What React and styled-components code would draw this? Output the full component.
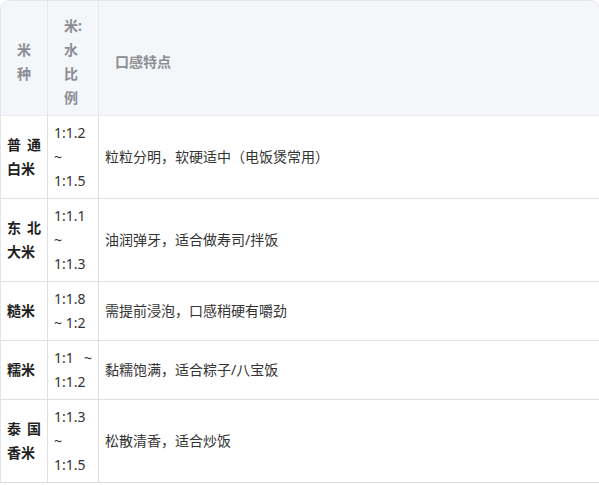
import React from 'react';
import styled, { createGlobalStyle } from 'styled-components';

const GlobalStyle = createGlobalStyle`
    body {
        margin: 0;
        background: #ffffff;
        font-family: "Noto Sans", "Noto Sans CJK SC", sans-serif;
    }
`;

const Table = styled.div`
    width: 600px;
    border: 1px solid #e4e5ea;
    border-bottom-color: #dedede;
    border-radius: 10px 10px 0 0;
    overflow: hidden;
    box-sizing: border-box;
`;

const Row = styled.div`
    display: grid;
    grid-template-columns: 47px 51px 1fr;
    background: ${(p) => (p.head ? '#f5f6fa' : '#ffffff')};
    border-bottom: ${(p) => (p.last ? 'none' : `1px solid ${p.head ? '#e8e9ee' : '#e0e0e0'}`)};
`;

const HeadCell = styled.div`
    box-sizing: border-box;
    display: flex;
    align-items: center;
    padding: 13px 16px 5px;
    font-size: 14px;
    line-height: 24px;
    font-weight: 700;
    color: #8b8d94;
    border-right: ${(p) => (p.end ? 'none' : '1px solid #e8e9ee')};
`;

const Cell = styled.div`
    box-sizing: border-box;
    display: flex;
    align-items: center;
    padding: 5px 6px;
    font-size: 14px;
    line-height: 24px;
    text-align: justify;
    color: ${(p) => (p.strong ? '#1f1f1f' : '#333333')};
    font-weight: ${(p) => (p.strong ? 700 : 400)};
    border-right: ${(p) => (p.end ? 'none' : '1px solid #e0e0e0')};

    span {
        display: block;
        width: 100%;
    }
`;

const rows = [
    { kind: '普通白米', ratio: '1:1.2 ~ 1:1.5', taste: '粒粒分明，软硬适中（电饭煲常用）' },
    { kind: '东北大米', ratio: '1:1.1 ~ 1:1.3', taste: '油润弹牙，适合做寿司/拌饭' },
    { kind: '糙米', ratio: '1:1.8 ~ 1:2', taste: '需提前浸泡，口感稍硬有嚼劲' },
    { kind: '糯米', ratio: '1:1 ~ 1:1.2', taste: '黏糯饱满，适合粽子/八宝饭' },
    { kind: '泰国香米', ratio: '1:1.3 ~ 1:1.5', taste: '松散清香，适合炒饭' },
];

export default function App() {
    return (
        <>
            <GlobalStyle />
            <Table>
                <Row head>
                    <HeadCell><span>米种</span></HeadCell>
                    <HeadCell><span>米:水比例</span></HeadCell>
                    <HeadCell end><span>口感特点</span></HeadCell>
                </Row>
                {rows.map((r, i) => (
                    <Row key={r.kind} last={i === rows.length - 1}>
                        <Cell strong><span>{r.kind}</span></Cell>
                        <Cell><span>{r.ratio}</span></Cell>
                        <Cell end><span>{r.taste}</span></Cell>
                    </Row>
                ))}
            </Table>
        </>
    );
}
